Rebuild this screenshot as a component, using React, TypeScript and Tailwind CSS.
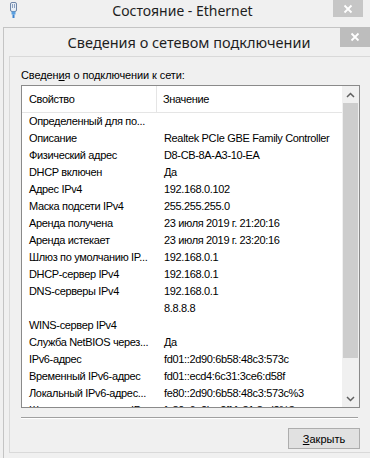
import React from "react";

const rows: [string, string][] = [
  ["Определенный для по...", ""],
  ["Описание", "Realtek PCIe GBE Family Controller"],
  ["Физический адрес", "D8-CB-8A-A3-10-EA"],
  ["DHCP включен", "Да"],
  ["Адрес IPv4", "192.168.0.102"],
  ["Маска подсети IPv4", "255.255.255.0"],
  ["Аренда получена", "23 июля 2019 г. 21:20:16"],
  ["Аренда истекает", "23 июля 2019 г. 23:20:16"],
  ["Шлюз по умолчанию IP...", "192.168.0.1"],
  ["DHCP-сервер IPv4", "192.168.0.1"],
  ["DNS-серверы IPv4", "192.168.0.1"],
  ["", "8.8.8.8"],
  ["WINS-сервер IPv4", ""],
  ["Служба NetBIOS через...", "Да"],
  ["IPv6-адрес", "fd01::2d90:6b58:48c3:573c"],
  ["Временный IPv6-адрес", "fd01::ecd4:6c31:3ce6:d58f"],
  ["Локальный IPv6-адрес...", "fe80::2d90:6b58:48c3:573c%3"],
  ["Шлюз по умолчанию IP...", "fe80::6a2b:c2ff:fe31:8cd2%3"],
];

function CloseX() {
  return (
    <svg width="10" height="10" viewBox="0 0 10 10">
      <path d="M1.5 1.5 L8.5 8.5 M8.5 1.5 L1.5 8.5" stroke="#ffffff" strokeWidth="1.8" />
    </svg>
  );
}

function PlugIcon() {
  return (
    <svg width="9" height="16" viewBox="0 0 9 16">
      <rect x="1.5" y="0.5" width="6" height="9" rx="1.5" fill="#e8eef5" stroke="#6f86a8" />
      <rect x="3" y="2" width="1" height="4" fill="#8aa0c0" />
      <rect x="5" y="2" width="1" height="4" fill="#8aa0c0" />
      <rect x="2.5" y="9.5" width="4" height="3" fill="#5aa0e0" />
      <rect x="3.5" y="12.5" width="2" height="3.5" fill="#3b82d0" />
    </svg>
  );
}

function Chevron({ up }: { up: boolean }) {
  return (
    <svg width="9" height="6" viewBox="0 0 9 6">
      <path
        d={up ? "M1 5 L4.5 1.5 L8 5" : "M1 1 L4.5 4.5 L8 1"}
        stroke="#606060"
        strokeWidth="1.5"
        fill="none"
      />
    </svg>
  );
}

export default function App() {
  return (
    <div className="w-[370px] h-[458px] overflow-hidden bg-[#f0f0f0] text-black flex flex-col">
      {/* outer title bar */}
      <div className="h-[27px] flex items-start shrink-0">
        <div className="w-[9px]" />
        <div className="pt-[2px]">
          <PlugIcon />
        </div>
        <div className="flex-1 text-center pl-[14px] pt-[1px] text-[14px] leading-[20px] text-[#1e1e1e] font-['Noto_Sans',sans-serif]">
          Состояние - Ethernet
        </div>
        <div className="w-[30px] h-[17px] bg-[#c6c6c6] flex items-center justify-center">
          <CloseX />
        </div>
        <div className="w-[7px]" />
      </div>

      {/* inner dialog */}
      <div className="ml-[3px] flex-1 border-l border-t border-[#c4c4c4] bg-[#f0f0f0] flex flex-col">
        <div className="h-[28px] flex items-start shrink-0">
          <div className="flex-1 text-center pl-[34px] pt-[4px] text-[14.5px] leading-[20px] text-[#1e1e1e] font-['Noto_Sans',sans-serif]">
            Сведения о сетевом подключении
          </div>
          <div className="w-[30px] h-[20px] -mt-[1px] bg-[#bdbdbd] flex items-center justify-center">
            <CloseX />
          </div>
        </div>

        <div className="ml-[5px] h-[397px] border-l border-t border-b border-[#d9d9d9] bg-[#f0f0f0] pl-[11px] pt-[11px] font-['Liberation_Sans',Arial,sans-serif] text-[11px]">
          <div className="leading-[14px] text-[#000] tracking-[-0.1px]">
            Сведен<span className="underline">и</span>я о подключении к сети:
          </div>

          <div className="mt-[3px] w-[339px] h-[323px] border border-[#8a8a8a] bg-white flex overflow-hidden tracking-[-0.35px]">
            <div className="flex-1 flex flex-col overflow-hidden">
              <div className="h-[27px] shrink-0 flex border-b border-[#e5e5e5]">
                <div className="w-[135px] border-r border-[#e5e5e5] pl-[7px] flex items-center">
                  Свойство
                </div>
                <div className="flex-1 pl-[6px] flex items-center">Значение</div>
              </div>
              {rows.map(([k, v], i) => (
                <div key={i} className="h-[17px] shrink-0 flex items-center whitespace-nowrap">
                  <div className="w-[135px] pl-[7px] overflow-hidden">{k}</div>
                  <div className="flex-1 pl-[7px]">{v}</div>
                </div>
              ))}
            </div>
            <div className="w-[17px] shrink-0 bg-[#f0f0f0] flex flex-col">
              <div className="h-[17px] flex items-center justify-center">
                <Chevron up />
              </div>
              <div className="h-[255px] mx-[1px] bg-[#cdcdcd]" />
              <div className="flex-1" />
              <div className="h-[17px] flex items-center justify-center">
                <Chevron up={false} />
              </div>
            </div>
          </div>

          <div className="mt-[9px] w-[337px] border-t border-[#a0a0a0] border-b border-b-white" />

          <div className="mt-[9px] w-[339px] flex justify-end">
            <div className="w-[72px] h-[21px] border border-[#adadad] bg-[#e1e1e1] flex items-center justify-center leading-[14px]">
              <span>
                <span className="underline">З</span>акрыть
              </span>
            </div>
          </div>
        </div>
      </div>
    </div>
  );
}
